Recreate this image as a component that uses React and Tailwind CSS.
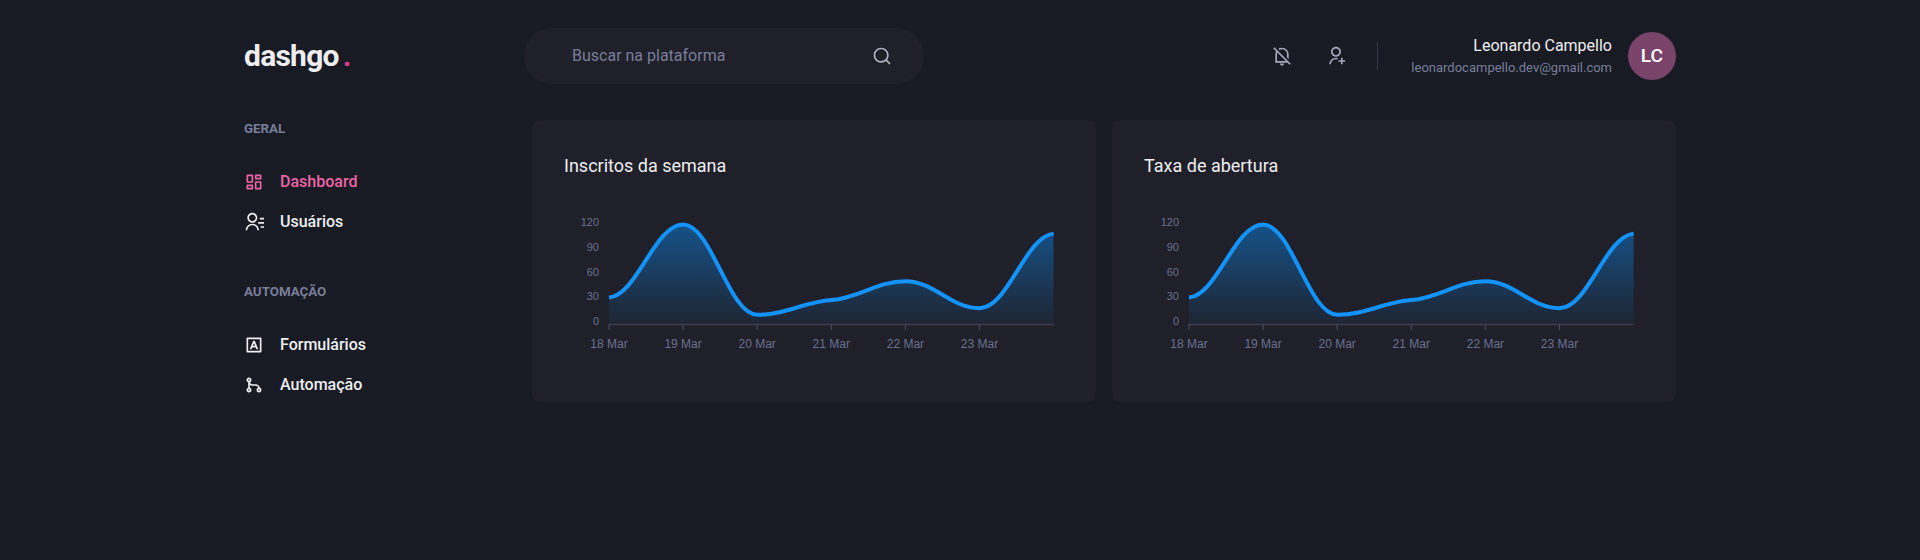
import {
  RiContactsLine,
  RiDashboardLine,
  RiGitMergeLine,
  RiInputMethodLine,
  RiNotificationOffLine,
  RiSearchLine,
  RiUserAddLine,
} from 'react-icons/ri'

const series = [31, 120, 10, 28, 51, 18, 109]
const tangents = [-0.1, 0, 0, -0.08, 0, 0, -0.1]
const dates = ['18 Mar', '19 Mar', '20 Mar', '21 Mar', '22 Mar', '23 Mar']
const yTicks = [120, 90, 60, 30, 0]

const chartX = (i) => 45 + i * 74.1
const chartY = (v) => 127 - v * 0.82

function smoothPath(values) {
  const pts = values.map((v, i) => [chartX(i), chartY(v)])
  let path = `M${pts[0][0]},${pts[0][1]}`
  for (let i = 1; i < pts.length; i++) {
    const h = (pts[i][0] - pts[i - 1][0]) / 2.6
    path += ` C${pts[i - 1][0] + h},${pts[i - 1][1] + tangents[i - 1] * h} ${pts[i][0] - h},${pts[i][1] - tangents[i] * h} ${pts[i][0]},${pts[i][1]}`
  }
  return path
}

function Chart({ id }) {
  const line = smoothPath(series)
  const area = `${line} L${chartX(6)},128 L${chartX(0)},128 Z`
  return (
    <svg width="500" height="174" viewBox="0 0 500 174" className="block">
      <defs>
        <linearGradient id={id} x1="0" y1="29" x2="0" y2="128" gradientUnits="userSpaceOnUse">
          <stop offset="0" stopColor="#0a8ffb" stopOpacity="0.45" />
          <stop offset="1" stopColor="#0a8ffb" stopOpacity="0.05" />
        </linearGradient>
      </defs>
      {yTicks.map((t) => (
        <text key={t} x="35" y={129 - t * 0.825} textAnchor="end" fontSize="11" fontFamily="'Liberation Sans', Arial, sans-serif" fill="#6b7190">
          {t}
        </text>
      ))}
      <path d={area} fill={`url(#${id})`} />
      <line x1={chartX(0)} y1="128.5" x2={chartX(6)} y2="128.5" stroke="#3c3e50" strokeWidth="1.5" />
      {dates.map((d, i) => (
        <g key={d}>
          <line x1={chartX(i)} y1="128" x2={chartX(i)} y2="134" stroke="#4b4d63" />
          <text x={chartX(i)} y="152" textAnchor="middle" fontSize="12" fontFamily="'Liberation Sans', Arial, sans-serif" fill="#6b7190">
            {d}
          </text>
        </g>
      ))}
      <path d={line} fill="none" stroke="#1293ff" strokeWidth="4" />
    </svg>
  )
}

function NavLink({ icon: Icon, active, children }) {
  return (
    <a href="#" className={`flex items-center font-medium ${active ? 'text-[#ed64a6]' : 'text-[#eeeef2]'}`}>
      <Icon size={20} />
      <span className="ml-4">{children}</span>
    </a>
  )
}

function NavSection({ title, children }) {
  return (
    <div>
      <p className="text-[13.33px] leading-[18px] font-bold text-[#797d9a]">{title}</p>
      <div className="flex flex-col gap-4 mt-8">{children}</div>
    </div>
  )
}

function Card({ title, id }) {
  return (
    <div className="bg-[#1f2029] rounded-lg p-8">
      <p className="text-lg leading-7 mb-4">{title}</p>
      <Chart id={id} />
    </div>
  )
}

export default function App() {
  return (
    <div className="min-h-screen pt-4 bg-[#181b23] text-[#eeeef2] font-['Roboto',sans-serif]">
      <header className="flex items-center h-20 max-w-[1480px] mx-auto px-6">
        <p className="w-64 text-3xl font-bold tracking-tight">
          dashgo<span className="ml-1 text-[#d53f8c]">.</span>
        </p>
        <label className="flex items-center ml-6 w-[400px] py-4 pl-12 pr-8 bg-[#1f2029] rounded-full text-[#b3b5c6]">
          <input
            placeholder="Buscar na plataforma"
            className="flex-1 min-w-0 leading-6 bg-transparent outline-none text-[#eeeef2] placeholder:text-[#797d9a]"
          />
          <RiSearchLine size={20} />
        </label>
        <div className="flex items-center ml-auto">
          <div className="flex items-center gap-[34px] pr-[31px] mr-[33px] h-7 border-r border-[#353646] text-[#a6a8ba]">
            <RiNotificationOffLine size={20} />
            <RiUserAddLine size={20} />
          </div>
          <div className="flex items-center">
            <div className="mr-4 text-right">
              <p className="leading-6">Leonardo Campello</p>
              <p className="text-[13px] leading-5 text-[#797d9a]">leonardocampello.dev@gmail.com</p>
            </div>
            <div className="flex items-center justify-center w-12 h-12 rounded-full bg-[#7a4369] text-[19.2px] font-medium text-white">
              LC
            </div>
          </div>
        </div>
      </header>

      <div className="flex max-w-[1480px] mx-auto px-6 mt-6">
        <aside className="w-64 mr-8 shrink-0 flex flex-col gap-[49px]">
          <NavSection title="GERAL">
            <NavLink icon={RiDashboardLine} active>Dashboard</NavLink>
            <NavLink icon={RiContactsLine}>Usuários</NavLink>
          </NavSection>
          <NavSection title="AUTOMAÇÃO">
            <NavLink icon={RiInputMethodLine}>Formulários</NavLink>
            <NavLink icon={RiGitMergeLine}>Automação</NavLink>
          </NavSection>
        </aside>
        <main className="flex-1 grid grid-cols-2 gap-4 content-start">
          <Card title="Inscritos da semana" id="area-a" />
          <Card title="Taxa de abertura" id="area-b" />
        </main>
      </div>
    </div>
  )
}
